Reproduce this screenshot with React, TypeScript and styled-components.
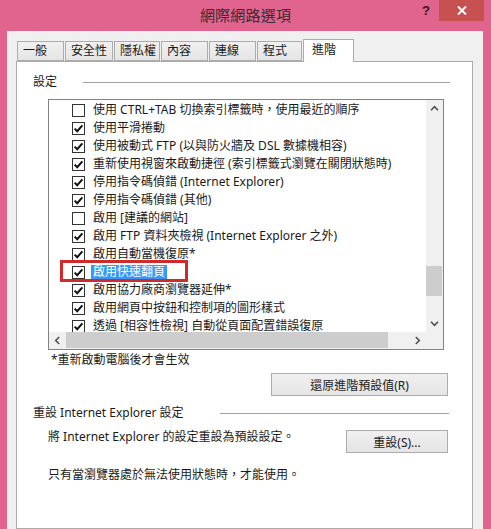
import React from 'react';
import styled, { createGlobalStyle } from 'styled-components';

const Global = createGlobalStyle`
  html, body { margin: 0; padding: 0; background: #e0648d; }
  body {
    font-family: "Noto Sans", "Noto Sans CJK TC", sans-serif;
    font-size: 12px;
    color: #1a1a1a;
  }
  * { box-sizing: border-box; }
`;

const Window = styled.div`
  width: 491px;
  height: 529px;
  background: #e0648d;
  display: flex;
  flex-direction: column;
  overflow: hidden;
`;

const TitleBar = styled.div`
  height: 31px;
  flex: none;
  display: grid;
  grid-template-columns: 1fr auto 1fr;
  align-items: start;
`;

const Title = styled.div`
  grid-column: 2;
  font-family: "Noto Sans CJK TC", sans-serif;
  font-size: 15px;
  line-height: 30px;
  color: #3a2a30;
  letter-spacing: 0.2px;
`;

const Controls = styled.div`
  grid-column: 3;
  justify-self: end;
  display: flex;
  margin-right: 7px;
`;

const HelpButton = styled.div`
  width: 26px;
  height: 21px;
  display: flex;
  align-items: center;
  justify-content: center;
  font-family: "Liberation Sans", sans-serif;
  font-weight: bold;
  font-size: 13px;
  color: #3a1022;
`;

const CloseButton = styled.div`
  width: 45px;
  height: 21px;
  background: #c75050;
  display: flex;
  align-items: center;
  justify-content: center;
`;

const Body = styled.div`
  flex: 1;
  margin: 0 8px 0 7px;
  background: #f0f0f0;
  padding: 8px 10px 0 9px;
  display: flex;
  flex-direction: column;
`;

const TabStrip = styled.div`
  height: 22px;
  display: flex;
  align-items: flex-end;
  gap: 1px;
  padding-left: 1px;
  flex: none;
`;

const Tab = styled.div<{ $w: number; $active?: boolean }>`
  width: ${p => p.$w}px;
  height: ${p => (p.$active ? 23 : 20)}px;
  margin-bottom: ${p => (p.$active ? -1 : 0)}px;
  border: 1px solid #acacac;
  border-bottom: ${p => (p.$active ? 'none' : '1px solid #acacac')};
  background: ${p => (p.$active ? '#ffffff' : 'linear-gradient(#f0f0f0, #e5e5e5)')};
  padding-left: ${p => (p.$active ? 8 : 5)}px;
  line-height: ${p => (p.$active ? 20 : 18)}px;
  position: relative;
  z-index: ${p => (p.$active ? 2 : 1)};
  color: #1a1a1a;
  white-space: nowrap;
`;

const Panel = styled.div`
  flex: 1;
  background: #ffffff;
  border: 1px solid #acacac;
  padding: 12px 0 0 0;
  display: flex;
  flex-direction: column;
  position: relative;
  z-index: 1;
`;

const GroupHeader = styled.div<{ $labelWidth: number; $right: number }>`
  display: flex;
  align-items: center;
  height: 16px;
  padding: 0 ${p => p.$right}px 0 16px;
  & > span {
    width: ${p => p.$labelWidth}px;
    flex: none;
    white-space: nowrap;
    line-height: 16px;
  }
  &::after {
    content: '';
    flex: 1;
    height: 1px;
    background: #a0a0a0;
  }
`;

const ListBox = styled.div`
  margin: 9px 0 0 31px;
  width: 396px;
  height: 251px;
  border: 1px solid #828282;
  display: grid;
  grid-template-columns: 1fr 17px;
  grid-template-rows: 1fr 17px;
  flex: none;
`;

const ListContent = styled.div`
  overflow: hidden;
  padding: 1px 0 0 23px;
  background: #ffffff;
`;

const Row = styled.div`
  height: 18px;
  display: flex;
  align-items: center;
  gap: 8px;
  white-space: nowrap;
  position: relative;
`;

const Box = styled.div`
  width: 13px;
  height: 13px;
  border: 1px solid #333333;
  background: #ffffff;
  flex: none;
  display: flex;
  align-items: center;
  justify-content: center;
`;

const Label = styled.span<{ $selected?: boolean }>`
  line-height: 14px;
  padding: 0 ${p => (p.$selected ? 2 : 0)}px;
  margin-left: ${p => (p.$selected ? -2 : 0)}px;
  background: ${p => (p.$selected ? '#3399ff' : 'transparent')};
  color: ${p => (p.$selected ? '#ffffff' : '#1a1a1a')};
`;

const Annotation = styled.div`
  position: absolute;
  left: -12px;
  top: -3px;
  width: 128px;
  height: 22px;
  border: 3px solid #d02a2a;
  pointer-events: none;
`;

const VScroll = styled.div`
  background: #f0f0f0;
  display: flex;
  flex-direction: column;
`;

const HScroll = styled.div`
  background: #f0f0f0;
  display: flex;
`;

const Corner = styled.div`
  background: #f0f0f0;
`;

const Arrow = styled.div`
  width: 17px;
  height: 17px;
  flex: none;
  display: flex;
  align-items: center;
  justify-content: center;
`;

const VTrack = styled.div`
  flex: 1;
  display: flex;
  flex-direction: column;
`;

const VThumb = styled.div<{ $offset: number; $size: number }>`
  margin: ${p => p.$offset}px 1px 0 0;
  height: ${p => p.$size}px;
  background: #cdcdcd;
`;

const HTrack = styled.div`
  flex: 1;
  display: flex;
`;

const HThumb = styled.div<{ $size: number }>`
  width: ${p => p.$size}px;
  margin: 0 0 1px 0;
  background: #cdcdcd;
`;

const Note = styled.div`
  margin: 2px 0 0 34px;
  line-height: 16px;
`;

const ButtonRow = styled.div<{ $top: number }>`
  margin-top: ${p => p.$top}px;
  display: flex;
  justify-content: space-between;
  align-items: flex-start;
  padding: 0 24px 0 31px;
`;

const Button = styled.div<{ $w: number }>`
  width: ${p => p.$w}px;
  height: 23px;
  border: 1px solid #acacac;
  background: linear-gradient(#f0f0f0, #e5e5e5);
  display: flex;
  align-items: center;
  justify-content: center;
  color: #1a1a1a;
  white-space: nowrap;
  margin-left: auto;
`;

const Text = styled.div<{ $top: number }>`
  margin: ${p => p.$top}px 0 0 31px;
  line-height: 16px;
  white-space: nowrap;
`;

const InlineText = styled.span`
  line-height: 14px;
  white-space: nowrap;
`;

const Check = () => (
  <svg width="11" height="11" viewBox="0 0 11 11">
    <path d="M1.6 5.6 L4.2 8.2 L9.4 2.4" fill="none" stroke="#111" strokeWidth="2" />
  </svg>
);

const Chevron = ({ dir }: { dir: 'up' | 'down' | 'left' | 'right' }) => {
  const rot = { up: 0, right: 90, down: 180, left: 270 }[dir];
  return (
    <svg width="9" height="9" viewBox="0 0 9 9" style={{ transform: `rotate(${rot}deg)` }}>
      <path d="M1 6.2 L4.5 2.7 L8 6.2" fill="none" stroke="#505050" strokeWidth="1.6" />
    </svg>
  );
};

const tabs = [
  { label: '一般', w: 47 },
  { label: '安全性', w: 48 },
  { label: '隱私權', w: 46 },
  { label: '內容', w: 47 },
  { label: '連線', w: 47 },
  { label: '程式', w: 45 },
  { label: '進階', w: 51, active: true },
];

const items: { text: string; checked: boolean; selected?: boolean }[] = [
  { text: '使用 CTRL+TAB 切換索引標籤時，使用最近的順序', checked: false },
  { text: '使用平滑捲動', checked: true },
  { text: '使用被動式 FTP (以與防火牆及 DSL 數據機相容)', checked: true },
  { text: '重新使用視窗來啟動捷徑 (索引標籤式瀏覽在關閉狀態時)', checked: true },
  { text: '停用指令碼偵錯 (Internet Explorer)', checked: true },
  { text: '停用指令碼偵錯 (其他)', checked: true },
  { text: '啟用 [建議的網站]', checked: false },
  { text: '啟用 FTP 資料夾檢視 (Internet Explorer 之外)', checked: true },
  { text: '啟用自動當機復原*', checked: true },
  { text: '啟用快速翻頁', checked: true, selected: true },
  { text: '啟用協力廠商瀏覽器延伸*', checked: true },
  { text: '啟用網頁中按鈕和控制項的圖形樣式', checked: true },
  { text: '透過 [相容性檢視] 自動從頁面配置錯誤復原', checked: true },
];

export default function App() {
  return (
    <>
      <Global />
      <Window>
        <TitleBar>
          <Title>網際網路選項</Title>
          <Controls>
            <HelpButton>?</HelpButton>
            <CloseButton>
              <svg width="10" height="9" viewBox="0 0 10 9">
                <path d="M1 0.5 L9 8.5 M9 0.5 L1 8.5" stroke="#ffffff" strokeWidth="2" />
              </svg>
            </CloseButton>
          </Controls>
        </TitleBar>
        <Body>
          <TabStrip>
            {tabs.map(t => (
              <Tab key={t.label} $w={t.w} $active={t.active}>
                {t.label}
              </Tab>
            ))}
          </TabStrip>
          <Panel>
            <GroupHeader $labelWidth={50} $right={22}>
              <span>設定</span>
            </GroupHeader>
            <ListBox>
              <ListContent>
                {items.map(it => (
                  <Row key={it.text}>
                    <Box>{it.checked && <Check />}</Box>
                    <Label $selected={it.selected}>{it.text}</Label>
                    {it.selected && <Annotation />}
                  </Row>
                ))}
              </ListContent>
              <VScroll>
                <Arrow><Chevron dir="up" /></Arrow>
                <VTrack>
                  <VThumb $offset={149} $size={30} />
                </VTrack>
                <Arrow><Chevron dir="down" /></Arrow>
              </VScroll>
              <HScroll>
                <Arrow><Chevron dir="left" /></Arrow>
                <HTrack>
                  <HThumb $size={322} />
                </HTrack>
                <Arrow><Chevron dir="right" /></Arrow>
              </HScroll>
              <Corner />
            </ListBox>
            <Note>*重新啟動電腦後才會生效</Note>
            <ButtonRow $top={5}>
              <Button $w={177}>還原進階預設值(R)</Button>
            </ButtonRow>
            <div style={{ height: 9 }} />
            <GroupHeader $labelWidth={187} $right={23}>
              <span>重設 Internet Explorer 設定</span>
            </GroupHeader>
            <ButtonRow $top={9}>
              <InlineText>將 Internet Explorer 的設定重設為預設設定。</InlineText>
              <Button $w={102}>重設(S)...</Button>
            </ButtonRow>
            <Text $top={14}>只有當瀏覽器處於無法使用狀態時，才能使用。</Text>
          </Panel>
        </Body>
      </Window>
    </>
  );
}
